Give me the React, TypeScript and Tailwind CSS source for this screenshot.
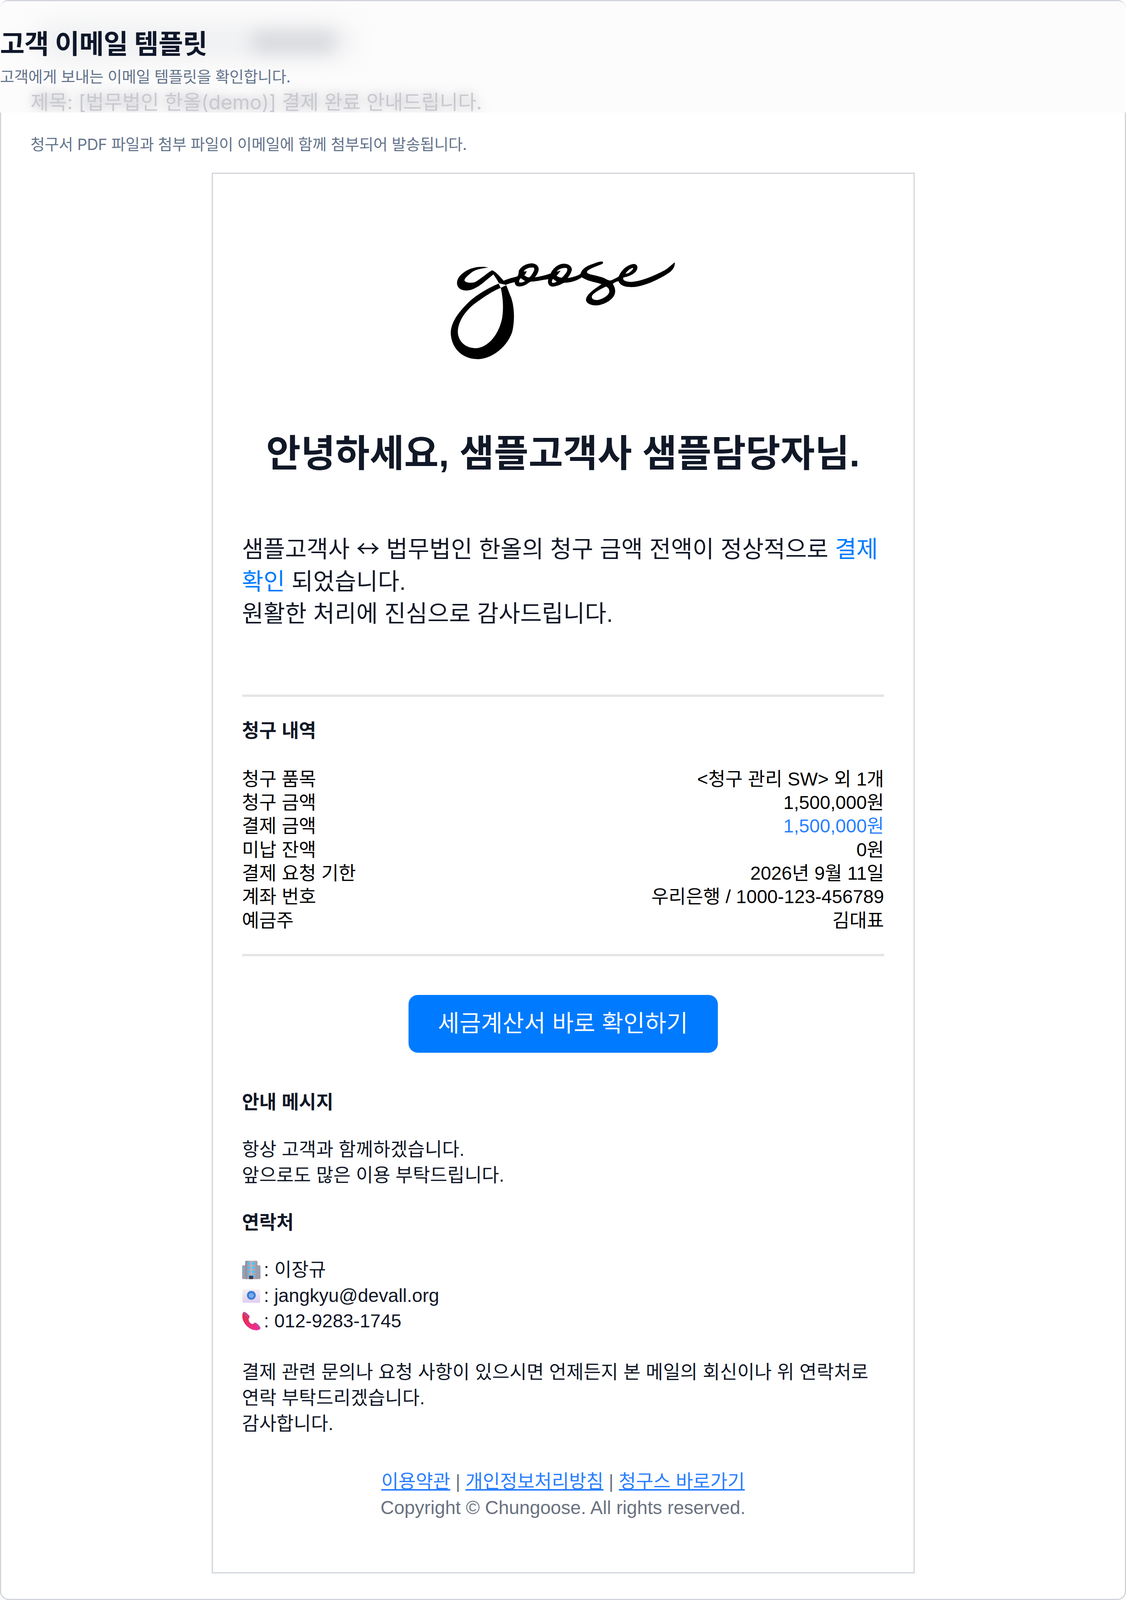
const sans = "font-['Inter','Noto_Sans_CJK_KR',sans-serif]";

const billRows = [
  { label: "청구 품목", value: "<청구 관리 SW> 외 1개" },
  { label: "청구 금액", value: "1,500,000원" },
  { label: "결제 금액", value: "1,500,000원", accent: true },
  { label: "미납 잔액", value: "0원" },
  { label: "결제 요청 기한", value: "2026년 9월 11일" },
  { label: "계좌 번호", value: "우리은행 / 1000-123-456789" },
  { label: "예금주", value: "김대표" },
];

function GooseLogo() {
  return (
    <svg
      viewBox="205 245 1130 825"
      preserveAspectRatio="none"
      className="mx-auto block h-[calc(275*var(--u))] w-[577px]"
    >
      {/* descender loop */}
      <path d="M447 432C400 465 330 530 290 600C245 675 207 760 207 850C210 960 255 1067 345 1067C420 1060 490 960 515 840C530 740 525 620 510 550C500 510 492 470 485 445L458 468C470 560 472 640 465 720C450 850 400 965 335 975C280 975 248 920 243 850C240 770 270 680 320 610C360 560 420 490 458 468Z" />
      {/* upper band, g bowl through e tail */}
      <g transform="translate(196 225) scale(0.7377 1)">
        <path
          fillRule="evenodd"
          d="M297 95C330 115 350 150 375 183C400 170 440 155 460 150C478 145 475 120 478 100C490 65 530 35 570 37C610 42 618 80 610 105C603 130 595 140 587 155C620 148 670 135 695 120C710 80 745 40 785 40C830 42 845 80 835 105C828 130 818 145 810 160C845 155 880 140 897 125C905 85 935 60 980 42C1010 28 1030 20 1045 22C1055 28 1050 40 1040 45C1010 60 965 78 945 100C935 115 945 122 965 130C1000 140 1040 150 1065 165C1080 178 1095 183 1105 180C1125 170 1150 155 1158 145C1170 105 1205 50 1260 42C1290 45 1290 85 1270 110C1250 135 1215 150 1190 155C1180 175 1195 190 1240 193C1310 190 1400 140 1470 95C1500 70 1520 45 1537 28C1542 50 1530 90 1500 115C1440 165 1350 220 1270 235C1220 240 1170 235 1155 187C1140 190 1125 200 1117 210C1132 240 1138 270 1128 300C1115 345 1050 395 990 390C950 385 930 360 935 335C945 290 990 255 1040 212C1000 195 950 190 905 155C880 180 830 200 790 200C770 205 755 225 715 232C685 235 670 210 678 170C640 175 600 190 560 190C535 205 520 230 480 232C455 230 450 210 450 195C425 200 405 210 390 218L343 205C335 185 320 155 305 130L255 180C215 225 165 265 125 265C85 265 62 245 58 210C55 170 75 135 120 100C170 65 230 60 270 72C240 78 190 85 160 110C130 140 110 160 108 180C115 200 150 205 180 195C230 160 270 110 297 95ZM510 105C525 80 550 70 575 72C585 75 585 90 578 105C570 125 560 145 548 155C535 155 525 145 515 138C525 125 528 115 532 102C525 103 518 107 510 105ZM490 162C480 175 478 190 482 198C500 200 510 195 520 185C510 178 500 170 490 162ZM735 105C750 85 770 73 800 75C810 80 810 95 800 115C790 130 780 150 768 158C755 155 740 150 735 140C748 125 755 110 762 97C752 100 745 107 735 105ZM710 168C703 180 700 192 705 200C718 203 728 198 735 190C725 182 718 175 710 168ZM1203 123C1215 100 1235 78 1255 75C1255 90 1240 105 1225 118C1217 122 1210 125 1203 123ZM1070 232C1040 250 990 280 975 310C970 335 985 347 1015 345C1050 335 1085 310 1092 280C1095 255 1085 240 1070 232Z"
        />
      </g>
    </svg>
  );
}

function BuildingIcon() {
  return (
    <svg viewBox="0 0 48 48" className="mr-[9px] inline-block h-[48px] w-[47px] align-[-8px]">
      <defs>
        <linearGradient id="bld" x1="0" y1="0" x2="1" y2="0">
          <stop offset="0" stopColor="#8f8a96" />
          <stop offset="0.5" stopColor="#bdb6c0" />
          <stop offset="1" stopColor="#9e97a4" />
        </linearGradient>
      </defs>
      <rect x="0" y="12" width="48" height="36" rx="3" fill="#a29ca8" />
      <rect x="8" y="0" width="32" height="48" rx="3" fill="url(#bld)" />
      {[14, 26].map((x) =>
        [8, 19, 30, 41].map((y) => (
          <rect key={`${x}-${y}`} x={x} y={y - 4} width="7" height="6" fill="#4cc2fb" />
        )),
      )}
      {[16, 24, 33].map((y) => (
        <g key={y}>
          <rect x="2" y={y} width="2" height="5" fill="#4cc2fb" />
          <rect x="44" y={y} width="2" height="5" fill="#4cc2fb" />
        </g>
      ))}
      <rect x="18" y="39" width="11" height="9" rx="2" fill="#453a50" />
    </svg>
  );
}

function MailIcon() {
  return (
    <svg viewBox="0 0 48 36" className="mr-[9px] inline-block h-[34px] w-[47px] align-[-2px]">
      <defs>
        <linearGradient id="env" x1="0" y1="0" x2="0" y2="1">
          <stop offset="0" stopColor="#f4f0f4" />
          <stop offset="1" stopColor="#e2cdf0" />
        </linearGradient>
      </defs>
      <rect width="48" height="36" rx="2" fill="url(#env)" />
      <path d="M0 2L24 20L48 2" fill="#efe9f0" />
      <circle cx="24" cy="16" r="12" fill="#3a7fd8" />
      <circle cx="24" cy="16" r="5" fill="none" stroke="#dbe8fb" strokeWidth="1.5" />
      <circle cx="24" cy="16" r="2" fill="none" stroke="#dbe8fb" strokeWidth="1.2" />
    </svg>
  );
}

function PhoneIcon() {
  return (
    <svg viewBox="0 0 48 48" className="mr-[9px] inline-block h-[48px] w-[47px] align-[-8px]">
      <defs>
        <linearGradient id="tel" x1="0" y1="0" x2="1" y2="1">
          <stop offset="0" stopColor="#e0303f" />
          <stop offset="1" stopColor="#f52aa0" />
        </linearGradient>
      </defs>
      <path
        d="M4 0C0 3 0 10 1 17C4 30 16 46 36 48C42 48 47 46 48 42C46 36 38 28 33 28C30 30 28 33 24 31C18 27 17 22 17 17C20 15 20 12 18 9C14 5 8 -1 4 0Z"
        fill="url(#tel)"
      />
      <path d="M4 0C7 1 14 8 18 11L15 15C11 10 5 5 2 3Z" fill="#b44fa0" />
      <path d="M33 28C38 29 45 36 48 42L46 45C42 39 36 33 30 30Z" fill="#b44fa0" />
    </svg>
  );
}

// vertical sizes are written in reference pixels through --u, so the page always fills the window height
export default function App() {
  return (
    <div className="h-screen w-full bg-white [--u:calc(100vh/4482)]">
      <div className="box-border h-full rounded-[22px] border-[3px] border-[#d1d5db]">
        {/* Page Header */}
        <div className={`relative -mx-[3px] h-[calc(312*var(--u))] overflow-hidden rounded-t-[20px] bg-[#fcfcfc] ${sans}`}>
          <div className="absolute left-[90px] top-[calc(60*var(--u))] h-[calc(104*var(--u))] w-[820px] rounded-full bg-[#e4e5e9] opacity-50 blur-[30px]" />
          <div className="absolute left-[640px] top-[calc(84*var(--u))] h-[calc(62*var(--u))] w-[220px] rounded-full bg-[#d2d3d8] opacity-80 blur-[22px]" />
          <div className="relative">
            <h1 className="pt-[calc(84*var(--u))] text-[68.5px] font-bold leading-[calc(72*var(--u))] tracking-[-0.6px] text-[#0f172a]">
              고객 이메일 템플릿
            </h1>
            <p className="mt-[calc(32*var(--u))] text-[40px] leading-[calc(48*var(--u))] tracking-[-0.5px] text-[#64748b]">
              고객에게 보내는 이메일 템플릿을 확인합니다.
            </p>
            <p className="mt-[calc(16*var(--u))] pl-[78px] text-[51px] leading-[calc(64*var(--u))] text-[#c8c9cf] [text-shadow:0_0_28px_rgba(110,110,125,0.55)]">
              제목: [법무법인 한올(demo)] 결제 완료 안내드립니다.
            </p>
          </div>
        </div>

        <p className={`mt-[calc(66*var(--u))] pl-[75px] text-[40px] leading-[calc(48*var(--u))] tracking-[-0.5px] text-[#64748b] ${sans}`}>
          청구서 PDF 파일과 첨부 파일이 이메일에 함께 첨부되어 발송됩니다.
        </p>

        {/* Email Preview */}
        <div className="mx-auto mt-[calc(54*var(--u))] box-border h-[calc(3924*var(--u))] w-[1800px] border-[3px] border-[#d1d5db] bg-white px-[75px] pt-[calc(246*var(--u))] font-['Liberation_Sans','Noto_Sans_CJK_KR',sans-serif] text-[48px] leading-[calc(72*var(--u))] text-[#111827]">
          <GooseLogo />

          <h2 className="mt-[calc(203*var(--u))] text-center text-[96px] font-bold leading-[calc(120*var(--u))] text-[#111827]">
            안녕하세요, 샘플고객사 샘플담당자님.
          </h2>

          <p className="mt-[calc(158*var(--u))] text-[60px] leading-[calc(90*var(--u))]">
            샘플고객사 <span className="font-['Noto_Sans_CJK_KR',sans-serif]">↔</span> 법무법인 한올의 청구 금액 전액이 정상적으로{" "}
            <span className="text-[#007bff]">결제</span> <span className="text-[#007bff]">확인</span> 되었습니다.
            <br />
            원활한 처리에 진심으로 감사드립니다.
          </p>

          <div className="mt-[calc(180*var(--u))] border-t-[6px] border-[#e5e5e5]" />

          <h3 className="mt-[calc(60*var(--u))] font-bold">청구 내역</h3>

          <div className="mt-[calc(66*var(--u))] text-black">
            {billRows.map((row) => (
              <div key={row.label} className="flex h-[calc(66*var(--u))] items-center justify-between">
                <span>{row.label}</span>
                <span className={row.accent ? "text-[#2a7fff]" : ""}>{row.value}</span>
              </div>
            ))}
          </div>

          <div className="mt-[calc(61*var(--u))] border-t-[6px] border-[#e5e5e5]" />

          <div className="mt-[calc(108*var(--u))] flex justify-center">
            <a className="flex h-[calc(162*var(--u))] w-[792px] items-center justify-center rounded-[24px] bg-[#007bff] text-[60px] text-white">
              세금계산서 바로 확인하기
            </a>
          </div>

          <h3 className="mt-[calc(103*var(--u))] font-bold">안내 메시지</h3>
          <p className="mt-[calc(60*var(--u))]">
            항상 고객과 함께하겠습니다.
            <br />
            앞으로도 많은 이용 부탁드립니다.
          </p>

          <h3 className="mt-[calc(61*var(--u))] font-bold">연락처</h3>
          <div className="mt-[calc(60*var(--u))]">
            <div><BuildingIcon />: 이장규</div>
            <div><MailIcon />: jangkyu@devall.org</div>
            <div><PhoneIcon />: 012-9283-1745</div>
          </div>

          <p className="mt-[calc(71*var(--u))]">
            결제 관련 문의나 요청 사항이 있으시면 언제든지 본 메일의 회신이나 위 연락처로
            <br />
            연락 부탁드리겠습니다.
            <br />
            감사합니다.
          </p>

          <div className="mt-[calc(90*var(--u))] text-center text-[#6b7280]">
            <div>
              <a className="text-[#2a7fff] underline">이용약관</a>
              {" | "}
              <a className="text-[#2a7fff] underline">개인정보처리방침</a>
              {" | "}
              <a className="text-[#2a7fff] underline">청구스 바로가기</a>
            </div>
            <div className="mt-[calc(2*var(--u))]">Copyright © Chungoose. All rights reserved.</div>
          </div>
        </div>
      </div>
    </div>
  );
}
